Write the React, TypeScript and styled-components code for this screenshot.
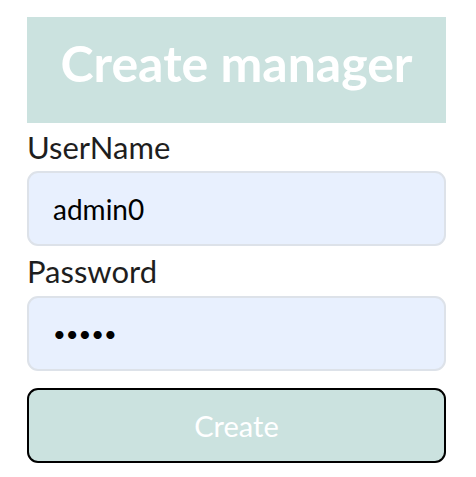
import React from "react";
import styled, { createGlobalStyle } from "styled-components";

const Global = createGlobalStyle`
  body {
    margin: 0;
    font-family: "Lato", "Open Sans", sans-serif;
    background: #ffffff;
  }
`;

const Page = styled.div`
  padding: 17px 30px 0 27px;
  width: 419px;
`;

const Form = styled.form`
  display: flex;
  flex-direction: column;
`;

const Header = styled.h1`
  margin: 0;
  box-sizing: border-box;
  height: 106px;
  padding-bottom: 15px;
  background: #cbe2df;
  color: #ffffff;
  font-size: 50px;
  line-height: 60px;
  font-weight: 700;
  display: flex;
  align-items: center;
  justify-content: center;
`;

const Label = styled.label<{ $gap: number }>`
  font-size: 31px;
  color: #1e1e1e;
  line-height: 36px;
  margin-top: ${(p) => p.$gap}px;
  margin-bottom: ${(p) => p.$gap}px;
`;

const Input = styled.input<{ $secret?: boolean }>`
  box-sizing: border-box;
  height: 75px;
  width: 100%;
  border: 2px solid #dde2e9;
  border-radius: 11px;
  background: #e8f0fe;
  padding: 0 24px;
  font-family: inherit;
  font-size: ${(p) => (p.$secret ? 22 : 28)}px;
  color: #000;
  outline: none;
`;

const Button = styled.button`
  box-sizing: border-box;
  margin-top: 17px;
  height: 75px;
  width: 100%;
  border: 2px solid #000;
  border-radius: 11px;
  background: #cbe2df;
  color: #ffffff;
  font-family: inherit;
  font-size: 29px;
`;

export default function App() {
  return (
    <Page>
      <Global />
      <Form onSubmit={(e) => e.preventDefault()}>
        <Header>Create manager</Header>
        <Label $gap={6}>UserName</Label>
        <Input type="text" defaultValue="admin0" />
        <Label $gap={7}>Password</Label>
        <Input type="password" defaultValue="admin" $secret />
        <Button type="submit">Create</Button>
      </Form>
    </Page>
  );
}
